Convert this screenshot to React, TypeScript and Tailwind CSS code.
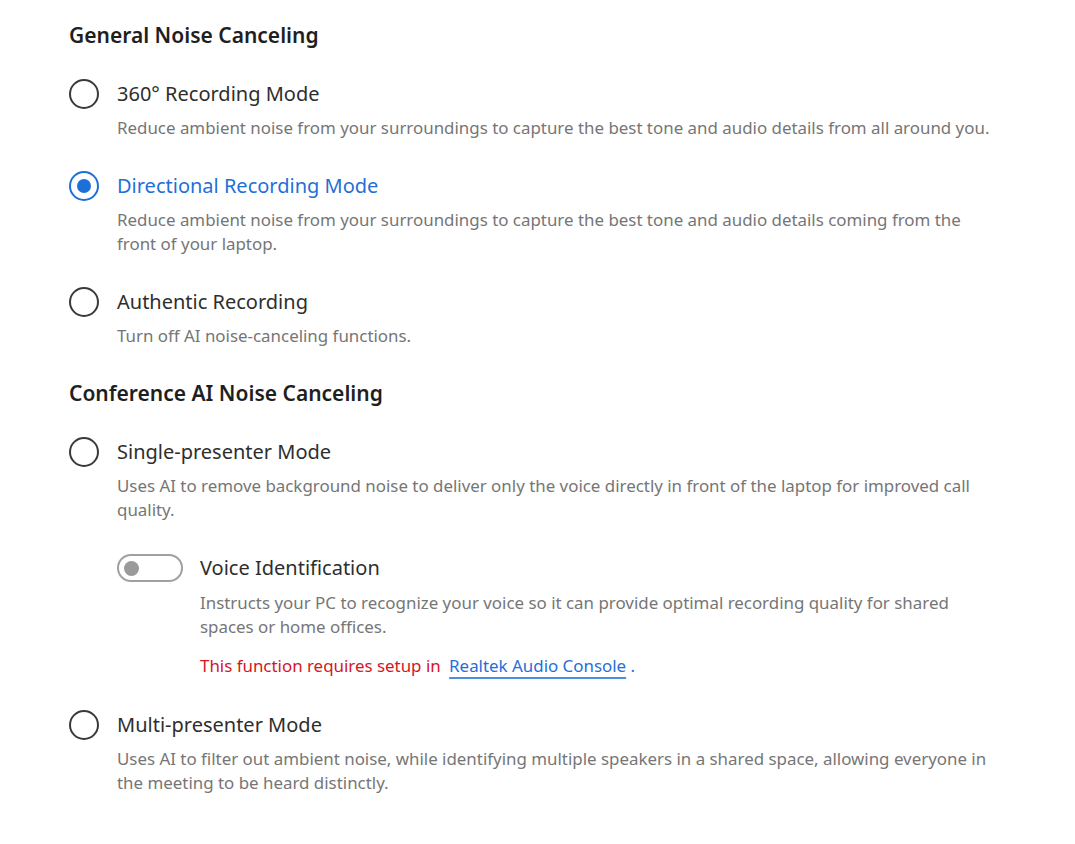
import { useState } from 'react';

type Option = {
  id: string;
  title: string;
  desc: string;
};

const general: Option[] = [
  {
    id: '360',
    title: '360° Recording Mode',
    desc: 'Reduce ambient noise from your surroundings to capture the best tone and audio details from all around you.',
  },
  {
    id: 'directional',
    title: 'Directional Recording Mode',
    desc: 'Reduce ambient noise from your surroundings to capture the best tone and audio details coming from the front of your laptop.',
  },
  {
    id: 'authentic',
    title: 'Authentic Recording',
    desc: 'Turn off AI noise-canceling functions.',
  },
];

function Radio({ checked }: { checked: boolean }) {
  return (
    <span
      className={`flex h-[30px] w-[30px] shrink-0 items-center justify-center rounded-full border-2 ${
        checked ? 'border-[#1f6fd8]' : 'border-[#3a3a3a]'
      }`}
    >
      {checked && <span className="h-[14px] w-[14px] rounded-full bg-[#1f6fd8]"></span>}
    </span>
  );
}

function RadioRow({
  option,
  checked,
  onSelect,
  children,
}: {
  option: Option;
  checked: boolean;
  onSelect: () => void;
  children?: React.ReactNode;
}) {
  return (
    <div className="flex flex-col">
      <button className="flex items-center gap-[18px] text-left" onClick={onSelect}>
        <Radio checked={checked} />
        <span className={`text-[20px] leading-[28px] ${checked ? 'text-[#1f6fd8]' : 'text-[#2e2e2e]'}`}>
          {option.title}
        </span>
      </button>
      <p className="mt-[7px] pl-[48px] text-[16.9px] leading-[24px] text-[#767676]">{option.desc}</p>
      {children}
    </div>
  );
}

export default function App() {
  const [generalMode, setGeneralMode] = useState('directional');
  const [confMode, setConfMode] = useState<string | null>(null);
  const [voiceId, setVoiceId] = useState(false);

  return (
    <div className="min-h-screen w-full bg-white font-['Noto_Sans',sans-serif]">
      <div className="w-[1002px] pl-[69px] pt-[21px] flex flex-col">
        <h2 className="text-[21px] leading-[28px] font-semibold text-[#1f1f1f]">General Noise Canceling</h2>

        <div className="mt-[30px] flex flex-col gap-[31px]">
          {general.map(opt => (
            <RadioRow
              key={opt.id}
              option={opt}
              checked={generalMode === opt.id}
              onSelect={() => setGeneralMode(opt.id)}
            />
          ))}
        </div>

        <h2 className="mt-[31px] text-[21px] leading-[28px] font-semibold text-[#1f1f1f]">
          Conference AI Noise Canceling
        </h2>

        <div className="mt-[30px] flex flex-col gap-[32px]">
          <RadioRow
            option={{
              id: 'single',
              title: 'Single-presenter Mode',
              desc: 'Uses AI to remove background noise to deliver only the voice directly in front of the laptop for improved call quality.',
            }}
            checked={confMode === 'single'}
            onSelect={() => setConfMode('single')}
          >
            <div className="mt-[32px] flex flex-col pl-[48px]">
              <div className="flex items-center gap-[17px]">
                <button
                  onClick={() => setVoiceId(v => !v)}
                  className="flex h-[28px] w-[66px] items-center rounded-full border-2 border-[#a0a0a0] px-[5px]"
                >
                  <span className="h-[15px] w-[15px] rounded-full bg-[#9a9a9a]"></span>
                </button>
                <span className="text-[20px] leading-[28px] text-[#2e2e2e]">Voice Identification</span>
              </div>
              <div className="pl-[83px]">
                <p className="mt-[9px] text-[16.9px] leading-[24px] text-[#767676]">
                  Instructs your PC to recognize your voice so it can provide optimal recording quality for shared spaces or home offices.
                </p>
                <p className="mt-[15px] text-[16.9px] leading-[24px] text-[#d3161f]">
                  This function requires setup in{' '}
                  <a className="ml-[4px] text-[#1f6fd8] underline decoration-[#4a90e2] decoration-2 underline-offset-[5px]">
                    Realtek Audio Console
                  </a>{' '}
                  <span className="text-[#1f6fd8]">.</span>
                </p>
              </div>
            </div>
          </RadioRow>

          <RadioRow
            option={{
              id: 'multi',
              title: 'Multi-presenter Mode',
              desc: 'Uses AI to filter out ambient noise, while identifying multiple speakers in a shared space, allowing everyone in the meeting to be heard distinctly.',
            }}
            checked={confMode === 'multi'}
            onSelect={() => setConfMode('multi')}
          />
        </div>
      </div>
    </div>
  );
}
